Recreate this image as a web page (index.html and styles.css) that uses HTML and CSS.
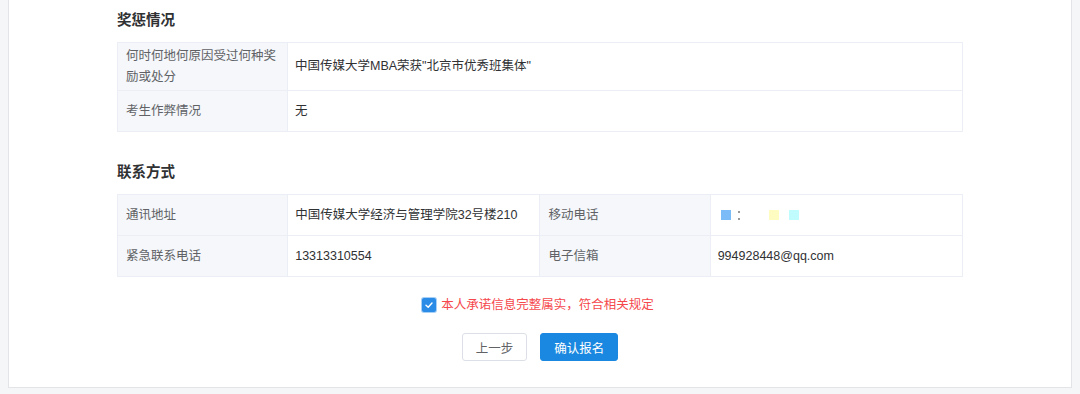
FILE: index.html
```html
<!DOCTYPE html>
<html>
<head>
  <meta charset="utf-8">
  <title>报名信息确认</title>
  <link rel="stylesheet" href="styles.css">
</head>
<body>
  <div class="panel">
    <h3 class="section-title">奖惩情况</h3>
    <table class="info-table">
      <tr class="tall">
        <td class="label">何时何地何原因受过何种奖励或处分</td>
        <td class="value">中国传媒大学MBA荣获"北京市优秀班集体"</td>
      </tr>
      <tr>
        <td class="label">考生作弊情况</td>
        <td class="value">无</td>
      </tr>
    </table>

    <h3 class="section-title second">联系方式</h3>
    <table class="info-table quad">
      <tr>
        <td class="label">通讯地址</td>
        <td class="value">中国传媒大学经济与管理学院32号楼210</td>
        <td class="label">移动电话</td>
        <td class="value">
          <span class="masked">
            <i class="blot blue"></i>
            <i class="dots"></i>
            <i class="blot yellow"></i>
            <i class="blot cyan"></i>
          </span>
        </td>
      </tr>
      <tr class="short">
        <td class="label">紧急联系电话</td>
        <td class="value">13313310554</td>
        <td class="label">电子信箱</td>
        <td class="value">994928448@qq.com</td>
      </tr>
    </table>

    <label class="promise">
      <span class="checkbox">
        <svg width="10" height="10" viewBox="0 0 10 10"><path d="M2 5.2 L4.2 7.2 L8 3" fill="none" stroke="#fff" stroke-width="1.4" stroke-linecap="round" stroke-linejoin="round"/></svg>
      </span>
      本人承诺信息完整属实，符合相关规定
    </label>

    <div class="actions">
      <button class="btn">上一步</button>
      <button class="btn primary">确认报名</button>
    </div>
  </div>
</body>
</html>
```

FILE: styles.css
```css
html, body {
  margin: 0;
  height: 394px;
  overflow: hidden;
}
body {
  font-family: "Liberation Sans", "Noto Sans CJK SC", sans-serif;
  font-size: 12.5px;
  color: #303133;
  background-color: #f5f6f8;
}
.panel {
  margin: 0 8px;
  padding: 10px 108px 26px;
  background-color: #fff;
  border: 1px solid #e2e4e8;
  border-top: none;
}
.section-title {
  margin: 0 0 12px;
  font-size: 14.5px;
  line-height: 20px;
  font-weight: bold;
  color: #303133;
}
.section-title.second {
  margin-top: 30px;
}
.info-table {
  width: 100%;
  border-collapse: collapse;
  table-layout: fixed;
}
.info-table td {
  border: 1px solid #ebeef5;
  padding: 0 8px;
  line-height: 21px;
  height: 41px;
  box-sizing: border-box;
}
.info-table td.value {
  padding-left: 7px;
}
.info-table .tall td {
  height: 48px;
}
.info-table .short td {
  height: 41px;
}
.info-table td.label {
  width: 170px;
  background-color: #f5f7fa;
  color: #606266;
}
.info-table.quad td.value {
  width: 252px;
}
.masked {
  display: inline-flex;
  align-items: center;
  vertical-align: middle;
  padding-left: 3px;
}
.blot {
  display: inline-block;
  width: 10px;
  height: 10px;
}
.blot.blue {
  background-color: #7bbcf8;
}
.blot.yellow {
  background-color: #fefcc0;
  margin-left: 29px;
}
.blot.cyan {
  background-color: #c0fcfd;
  margin-left: 10px;
}
.dots {
  display: inline-block;
  width: 2px;
  height: 9px;
  margin-left: 7px;
  background: linear-gradient(#999 0 2px, transparent 2px 7px, #999 7px 9px);
}
.promise {
  display: flex;
  align-items: center;
  justify-content: center;
  margin-top: 18px;
  line-height: 20px;
  color: #f5484c;
  padding-right: 4px;
}
.checkbox {
  display: inline-flex;
  align-items: center;
  justify-content: center;
  width: 14px;
  height: 14px;
  margin-right: 5px;
  border-radius: 2px;
  background-color: #2b8ce8;
  box-shadow: 0 0 0 1px #a8cff5;
}
.actions {
  display: flex;
  justify-content: center;
  gap: 13px;
  margin-top: 18px;
}
.btn {
  font-family: inherit;
  font-size: 12.5px;
  height: 28px;
  padding: 0 13px;
  border: 1px solid #dcdfe6;
  border-radius: 3px;
  background-color: #fff;
  color: #606266;
  cursor: pointer;
}
.btn.primary {
  background-color: #1a88e0;
  border-color: #1a88e0;
  color: #fff;
}
```
